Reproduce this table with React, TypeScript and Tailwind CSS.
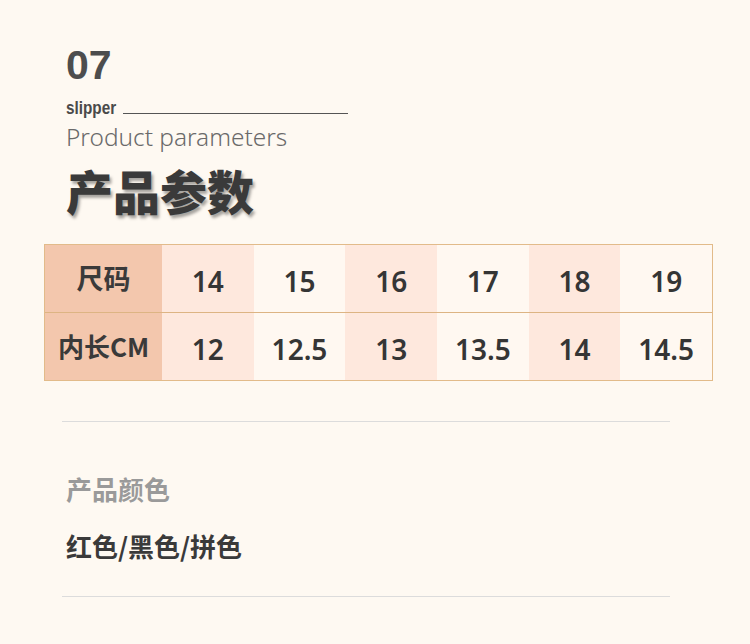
import React from "react";

const sizes = ["14", "15", "16", "17", "18", "19"];
const lens = ["12", "12.5", "13", "13.5", "14", "14.5"];

export default function App() {
  const cellBg = (i: number) => (i % 2 === 0 ? "bg-[#fee8dd]" : "bg-[#fff8f1]");
  return (
    <div
      className="w-[750px] h-[644px] bg-[#fef9f2] overflow-hidden"
      style={{ fontFamily: '"Noto Sans", "Noto Sans CJK SC", sans-serif' }}
    >
      <div className="pl-[66px] pt-[42px]">
        <div
          className="text-[41px] leading-[46px] font-bold text-[#4d4d4d]"
          style={{ fontFamily: '"Liberation Sans", Arial, sans-serif' }}
        >
          07
        </div>
        <div className="flex items-end h-[28px]">
          <div className="w-[57px] h-[20px] overflow-visible">
            <span
              className="inline-block text-[18px] leading-[20px] font-bold text-[#4a4a4a] scale-x-[0.85] origin-left"
              style={{ fontFamily: '"Liberation Sans", Arial, sans-serif' }}
            >
              slipper
            </span>
          </div>
          <div className="mb-[2px] w-[225px] h-[1px] bg-[#555]" />
        </div>
        <div className="mt-[6px] text-[24.4px] leading-[30px] text-[#6a6a6a] font-light">
          Product parameters
        </div>
        <div
          className="mt-[10px] text-[47px] leading-[56px] font-black text-[#3a3a3a]"
          style={{
            fontFamily: '"Noto Sans CJK SC", sans-serif',
            textShadow: "2px 3px 3px rgba(0,0,0,0.35)",
          }}
        >
          产品参数
        </div>
      </div>

      <div className="ml-[44px] mt-[26px] w-[669px] border border-[#e2bb8a]">
        <div className="flex h-[68px] border-b border-[#ddb483]">
          <div
            className="w-[117px] flex items-center justify-center bg-[#f3c7ad] text-[27px] font-semibold text-[#3a3a3a]"
            style={{ fontFamily: '"Noto Sans CJK SC", sans-serif' }}
          >
            尺码
          </div>
          {sizes.map((s, i) => (
            <div
              key={s}
              className={`flex-1 flex items-center justify-center pt-[4px] text-[28px] font-semibold text-[#353535] ${cellBg(i)}`}
            >
              {s}
            </div>
          ))}
        </div>
        <div className="flex h-[67px]">
          <div
            className="w-[117px] flex items-center justify-center bg-[#f3c7ad] text-[26px] font-bold text-[#3a3a3a] pb-[2px]"
            style={{ fontFamily: '"Noto Sans CJK SC", sans-serif' }}
          >
            内长CM
          </div>
          {lens.map((s, i) => (
            <div
              key={i}
              className={`flex-1 flex items-center justify-center pt-[4px] text-[28px] font-semibold text-[#353535] ${cellBg(i)}`}
            >
              {s}
            </div>
          ))}
        </div>
      </div>

      <div className="ml-[62px] mt-[40px] w-[608px] h-[1px] bg-[#dcdcdc]" />
      <div
        className="ml-[66px] mt-[51px] text-[26px] leading-[32px] font-bold text-[#9a9a9a]"
        style={{ fontFamily: '"Noto Sans CJK SC", sans-serif' }}
      >
        产品颜色
      </div>
      <div
        className="ml-[66px] mt-[25px] text-[26px] leading-[32px] font-bold text-[#3a3a3a]"
        style={{ fontFamily: '"Noto Sans CJK SC", sans-serif' }}
      >
        红色/黑色/拼色
      </div>
      <div className="ml-[62px] mt-[34px] w-[608px] h-[1px] bg-[#dcdcdc]" />
    </div>
  );
}
